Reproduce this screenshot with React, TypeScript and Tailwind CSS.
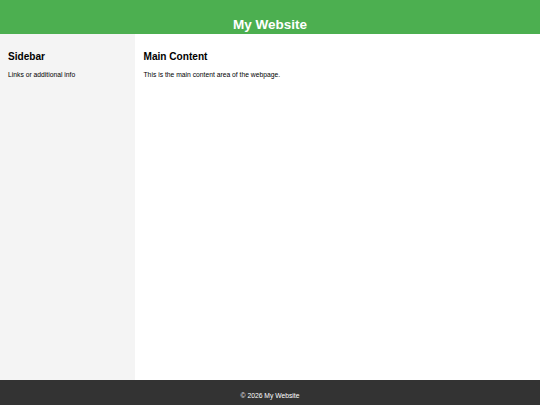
import React from 'react';

export default function App() {
  return (
    <div className="flex flex-col h-screen font-['Liberation_Sans',Arial,sans-serif] text-black">
      <header className="h-[34px] shrink-0 bg-[#4caf50] text-white text-center">
        <h1 className="pt-[16px] text-[13.5px] leading-[17px] font-bold">My Website</h1>
      </header>

      <div className="flex flex-1 min-h-0">
        <aside className="w-[135px] shrink-0 bg-[#f4f4f4] px-[8px]">
          <h2 className="mt-[16.5px] text-[10.1px] leading-[12px] font-bold">Sidebar</h2>
          <p className="mt-[7px] text-[6.75px] leading-[9px]">Links or additional info</p>
        </aside>
        <main className="flex-1 bg-white px-[8.5px]">
          <h2 className="mt-[16.5px] text-[10.1px] leading-[12px] font-bold">Main Content</h2>
          <p className="mt-[7px] text-[6.75px] leading-[9px]">This is the main content area of the webpage.</p>
        </main>
      </div>

      <footer className="h-[25px] shrink-0 bg-[#333333] text-white text-center">
        <p className="pt-[12px] text-[6.75px] leading-[8px]">© 2026 My Website</p>
      </footer>
    </div>
  );
}
